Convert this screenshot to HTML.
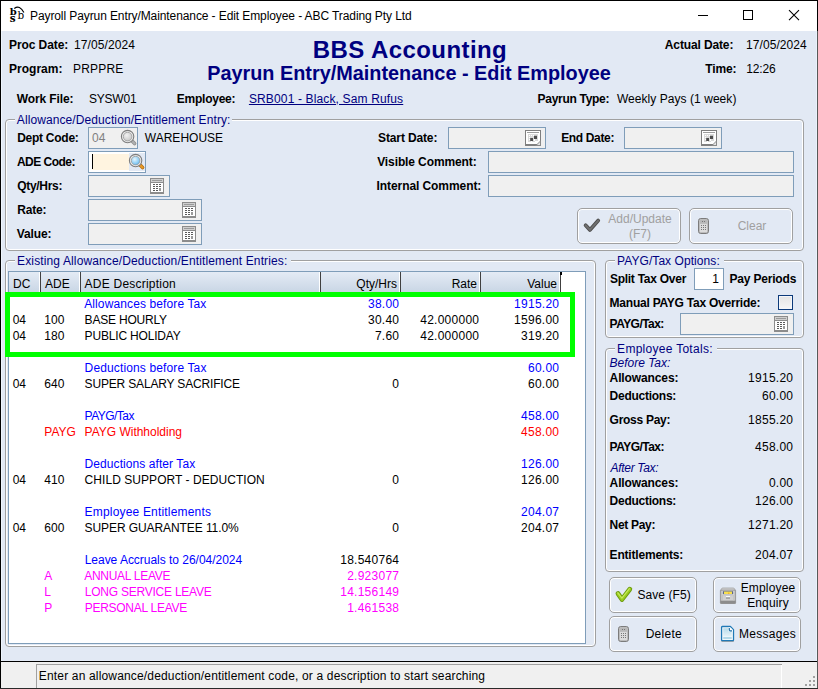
<!DOCTYPE html>
<html>
<head>
<meta charset="utf-8">
<title>Payroll Payrun Entry/Maintenance - Edit Employee - ABC Trading Pty Ltd</title>
<style>
html,body{margin:0;padding:0;}
body{width:818px;height:689px;overflow:hidden;background:#000;font-family:"Liberation Sans",sans-serif;font-size:12px;color:#000;}
#win{position:absolute;left:0;top:0;width:818px;height:689px;overflow:hidden;background:#000;}
#titlebar{position:absolute;left:1px;top:1px;width:816px;height:30px;background:#fff;}
#client{position:absolute;left:1px;top:31px;width:816px;height:630px;background:#e2e9f4;}
#blk{position:absolute;left:1px;top:661px;width:816px;height:1px;background:#000;}
#status{position:absolute;left:1px;top:662px;width:816px;height:26px;background:#f0f0f0;}
.t{position:absolute;white-space:nowrap;line-height:14px;height:14px;font-size:12px;}
.b{font-weight:bold;}
.navy{color:#000080;}
.blue{color:#0000ff;}
.red{color:#ff0000;}
.mag{color:#ff00ff;}
.dis{color:#a0a0a0;}
.num{letter-spacing:0.25px;margin-right:-0.25px;}
.ic{position:absolute;overflow:visible;}
.grp{position:absolute;box-sizing:border-box;border:1px solid #a0a0a0;border-radius:4px;box-shadow:inset 0 0 0 1px #fff;}
.leg{position:absolute;white-space:nowrap;line-height:14px;height:14px;font-size:12px;color:#000080;background:#e2e9f4;padding:0 2px;}
.inp{position:absolute;box-sizing:border-box;border:1px solid #7f9db9;background:#f0f0f0;}
.btn{position:absolute;box-sizing:border-box;border:1px solid #a0a0a0;border-radius:5px;box-shadow:inset 0 0 0 1px #fff;}
#tbl{position:absolute;box-sizing:border-box;left:8px;top:271px;width:578px;height:373px;border:1px solid #7f9db9;background:#fff;}
#thead{position:absolute;left:9px;top:272px;width:552px;height:20px;background:linear-gradient(#e4ebf5,#c9d6e5);}
.dv{position:absolute;top:272px;width:1px;height:20px;background:#fff;border-right:1px solid #404040;}
</style>
</head>
<body>
<div id="win">
<div id="titlebar"></div>
<div id="client"></div>
<div style="position:absolute;left:1px;top:31px;width:1px;height:630px;background:#eef5fd;"></div>
<div style="position:absolute;left:816px;top:31px;width:1px;height:630px;background:#eaf2fc;"></div>
<svg class="ic" style="left:6px;top:3px" width="24" height="24" viewBox="6 3 24 24"><text x="9.7" y="14.8" font-family="DejaVu Serif,serif" font-weight="bold" font-size="10" fill="#000">b</text><text x="9.8" y="22" font-family="DejaVu Serif,serif" font-weight="bold" font-size="10.4" fill="#000">s</text><text x="17.6" y="18.9" font-family="DejaVu Serif,serif" font-size="10.4" fill="#000">b</text><path d="M14.3 8.4 Q19.8 4.4 23.9 12.6" fill="none" stroke="#000" stroke-width="1.2"/></svg>
<div class="t " id="ttl" style="left:30.0px;top:9px;letter-spacing:-0.095px;">Payroll Payrun Entry/Maintenance - Edit Employee - ABC Trading Pty Ltd</div>
<svg class="ic" style="left:690px;top:1px" width="127" height="30" viewBox="0 0 127 30"><g stroke="#000" stroke-width="1" fill="none"><path d="M8 14.5 H18"/><rect x="53.5" y="9.5" width="9" height="9"/><path d="M99 9.2 L109 19.2 M109 9.2 L99 19.2" stroke-width="1.1"/></g></svg>
<div class="t b" style="left:9.1px;top:38px;letter-spacing:-0.102px;">Proc Date:</div>
<div class="t " style="left:74.0px;top:38px;letter-spacing:0.091px;">17/05/2024</div>
<div class="t b" style="left:9.1px;top:62px;letter-spacing:-0.007px;">Program:</div>
<div class="t " style="left:73.1px;top:62px;letter-spacing:0.151px;">PRPPRE</div>
<div class="t b navy" id="h1" style="left:1px;width:818px;text-align:center;top:36px;font-size:24px;letter-spacing:0.42px;line-height:28px;height:28px;">BBS Accounting</div>
<div class="t b navy" id="h2" style="left:0;width:818px;text-align:center;top:61px;font-size:19.85px;line-height:24px;height:24px;">Payrun Entry/Maintenance - Edit Employee</div>
<div class="t b" style="left:664.8px;top:38px;letter-spacing:-0.129px;">Actual Date:</div>
<div class="t " style="left:746.1px;top:38px;letter-spacing:0.068px;">17/05/2024</div>
<div class="t b" style="left:705.3px;top:62px;letter-spacing:-0.173px;">Time:</div>
<div class="t " style="left:746.2px;top:62px;letter-spacing:-0.139px;">12:26</div>
<div class="t b" style="left:16.8px;top:92px;letter-spacing:-0.121px;">Work File:</div>
<div class="t " style="left:88.9px;top:92px;letter-spacing:-0.202px;">SYSW01</div>
<div class="t b" style="left:176.8px;top:92px;letter-spacing:-0.249px;">Employee:</div>
<div class="t navy" style="left:248.9px;top:92px;text-decoration:underline;letter-spacing:0.145px;">SRB001 - Black, Sam Rufus</div>
<div class="t b" style="left:537.6px;top:92px;letter-spacing:-0.294px;">Payrun Type:</div>
<div class="t " style="left:616.9px;top:92px;letter-spacing:0.053px;">Weekly Pays (1 week)</div>
<div class="grp" style="left:5px;top:119px;width:799px;height:132px;"></div>
<div class="leg" style="left:14.80px;top:113px;letter-spacing:0.095px;padding-right:1.3px;">Allowance/Deduction/Entitlement Entry:</div>
<div class="t b" style="left:17.2px;top:131px;letter-spacing:-0.267px;">Dept Code:</div>
<div class="inp" style="left:88px;top:127px;width:50px;height:22px;"></div>
<div class="t " style="left:92px;top:131px;color:#808080;">04</div>
<svg class="ic" style="left:120px;top:129px" width="17" height="17" viewBox="0 0 17 17"><defs><radialGradient id="lg2" cx="0.4" cy="0.35" r="0.8"><stop offset="0" stop-color="#f2f2f2"/><stop offset="0.7" stop-color="#cfcfcf"/><stop offset="1" stop-color="#b4b4b4"/></radialGradient></defs><path d="M11.6 11.6 L14.6 14.6" stroke="#909090" stroke-width="3.6" stroke-linecap="round"/><path d="M12 12 L14.5 14.5" stroke="#b0b0b0" stroke-width="2" stroke-linecap="round"/><circle cx="7.6" cy="7.6" r="6.2" fill="#ededed" stroke="#7e7e7e" stroke-width="1.1"/><circle cx="7.6" cy="7.6" r="4.3" fill="url(#lg2)" stroke="#9a9a9a" stroke-width="0.8"/></svg>
<div class="t " style="left:144.8px;top:131px;letter-spacing:0.009px;">WAREHOUSE</div>
<div class="t b" style="left:16.9px;top:155px;letter-spacing:-0.509px;">ADE Code:</div>
<div class="inp" style="left:88px;top:151px;width:58px;height:22px;background:#fff;"></div>
<div style="position:absolute;left:92px;top:154px;width:37px;height:16px;background:#fff4e0;"></div>
<div style="position:absolute;left:129px;top:153px;width:16px;height:18px;background:#e2e9f4;"></div>
<div style="position:absolute;left:92px;top:154px;width:1px;height:15px;background:#000;"></div>
<svg class="ic" style="left:128.3px;top:152.8px" width="17" height="17" viewBox="0 0 17 17"><defs><radialGradient id="lg" cx="0.4" cy="0.35" r="0.8"><stop offset="0" stop-color="#e6f6ff"/><stop offset="0.6" stop-color="#8ccdf5"/><stop offset="1" stop-color="#4aa3e0"/></radialGradient></defs><path d="M11.6 11.6 L14.6 14.6" stroke="#b87010" stroke-width="3.6" stroke-linecap="round"/><path d="M12 12 L14.5 14.5" stroke="#e89a28" stroke-width="2" stroke-linecap="round"/><circle cx="7.6" cy="7.6" r="6.2" fill="#ededed" stroke="#7e7e7e" stroke-width="1.1"/><circle cx="7.6" cy="7.6" r="4.3" fill="url(#lg)" stroke="#9a9a9a" stroke-width="0.8"/></svg>
<div class="t b" style="left:17.2px;top:179px;letter-spacing:-0.293px;">Qty/Hrs:</div>
<div class="inp" style="left:88px;top:175px;width:82px;height:22px;"></div>
<svg class="ic" style="left:150px;top:178px" width="14" height="16" viewBox="0 0 14 16"><rect x="0.5" y="0.5" width="13" height="15" fill="#fff" stroke="#8c8c8c"/><rect x="1" y="1" width="12" height="3" fill="#cfcfcf"/><rect x="2" y="2" width="10" height="1" fill="#9a9a9a"/><rect x="0" y="4" width="14" height="1" fill="#8c8c8c"/><rect x="0" y="14" width="14" height="2" fill="#8c8c8c"/><g fill="#5a5a5a"><rect x="3" y="6" width="2" height="1"/><rect x="6" y="6" width="2" height="1"/><rect x="9" y="6" width="2" height="1"/><rect x="3" y="8" width="2" height="1"/><rect x="6" y="8" width="2" height="1"/><rect x="9" y="8" width="2" height="1"/><rect x="3" y="10" width="2" height="1"/><rect x="6" y="10" width="2" height="1"/><rect x="3" y="12" width="2" height="1"/><rect x="6" y="12" width="2" height="1"/></g><rect x="9" y="10" width="2" height="3" fill="#9a9a9a"/></svg>
<div class="t b" style="left:17.2px;top:203px;letter-spacing:-0.177px;">Rate:</div>
<div class="inp" style="left:88px;top:199px;width:114px;height:22px;"></div>
<svg class="ic" style="left:182px;top:202px" width="14" height="16" viewBox="0 0 14 16"><rect x="0.5" y="0.5" width="13" height="15" fill="#fff" stroke="#8c8c8c"/><rect x="1" y="1" width="12" height="3" fill="#cfcfcf"/><rect x="2" y="2" width="10" height="1" fill="#9a9a9a"/><rect x="0" y="4" width="14" height="1" fill="#8c8c8c"/><rect x="0" y="14" width="14" height="2" fill="#8c8c8c"/><g fill="#5a5a5a"><rect x="3" y="6" width="2" height="1"/><rect x="6" y="6" width="2" height="1"/><rect x="9" y="6" width="2" height="1"/><rect x="3" y="8" width="2" height="1"/><rect x="6" y="8" width="2" height="1"/><rect x="9" y="8" width="2" height="1"/><rect x="3" y="10" width="2" height="1"/><rect x="6" y="10" width="2" height="1"/><rect x="3" y="12" width="2" height="1"/><rect x="6" y="12" width="2" height="1"/></g><rect x="9" y="10" width="2" height="3" fill="#9a9a9a"/></svg>
<div class="t b" style="left:16.8px;top:227px;letter-spacing:-0.131px;">Value:</div>
<div class="inp" style="left:88px;top:223px;width:114px;height:22px;"></div>
<svg class="ic" style="left:182px;top:226px" width="14" height="16" viewBox="0 0 14 16"><rect x="0.5" y="0.5" width="13" height="15" fill="#fff" stroke="#8c8c8c"/><rect x="1" y="1" width="12" height="3" fill="#cfcfcf"/><rect x="2" y="2" width="10" height="1" fill="#9a9a9a"/><rect x="0" y="4" width="14" height="1" fill="#8c8c8c"/><rect x="0" y="14" width="14" height="2" fill="#8c8c8c"/><g fill="#5a5a5a"><rect x="3" y="6" width="2" height="1"/><rect x="6" y="6" width="2" height="1"/><rect x="9" y="6" width="2" height="1"/><rect x="3" y="8" width="2" height="1"/><rect x="6" y="8" width="2" height="1"/><rect x="9" y="8" width="2" height="1"/><rect x="3" y="10" width="2" height="1"/><rect x="6" y="10" width="2" height="1"/><rect x="3" y="12" width="2" height="1"/><rect x="6" y="12" width="2" height="1"/></g><rect x="9" y="10" width="2" height="3" fill="#9a9a9a"/></svg>
<div class="t b" style="left:378.1px;top:131px;letter-spacing:-0.138px;">Start Date:</div>
<div class="inp" style="left:448px;top:127px;width:98px;height:22px;"></div>
<svg class="ic" style="left:525px;top:130px" width="16" height="16" viewBox="0 0 16 16"><rect x="0.5" y="0.5" width="15" height="15" fill="#fff" stroke="#7e7e7e"/><rect x="0" y="14" width="16" height="2" fill="#808080"/><rect x="2" y="2" width="12" height="1" fill="#9c9c9c"/><rect x="3" y="4" width="10" height="8" fill="#dadada"/><g fill="#fff"><rect x="4" y="5" width="1" height="1"/><rect x="6" y="5" width="1" height="1"/><rect x="8" y="5" width="1" height="1"/><rect x="4" y="7" width="1" height="1"/><rect x="4" y="9" width="1" height="1"/><rect x="9" y="9" width="1" height="2"/><rect x="6" y="11" width="1" height="1"/><rect x="10" y="11" width="3" height="1"/></g><rect x="5.2" y="8" width="2.8" height="3" fill="#4e4e4e"/><rect x="9" y="5.8" width="3" height="3.2" fill="#4e4e4e"/><path d="M10 16 L16 10 L16 16 Z" fill="#8a8a8a"/><path d="M12 15 L15 12 L15 15 Z" fill="#e4e4e4"/></svg>
<div class="t b" style="left:561.2px;top:131px;letter-spacing:-0.351px;">End Date:</div>
<div class="inp" style="left:624px;top:127px;width:98px;height:22px;"></div>
<svg class="ic" style="left:701px;top:130px" width="16" height="16" viewBox="0 0 16 16"><rect x="0.5" y="0.5" width="15" height="15" fill="#fff" stroke="#7e7e7e"/><rect x="0" y="14" width="16" height="2" fill="#808080"/><rect x="2" y="2" width="12" height="1" fill="#9c9c9c"/><rect x="3" y="4" width="10" height="8" fill="#dadada"/><g fill="#fff"><rect x="4" y="5" width="1" height="1"/><rect x="6" y="5" width="1" height="1"/><rect x="8" y="5" width="1" height="1"/><rect x="4" y="7" width="1" height="1"/><rect x="4" y="9" width="1" height="1"/><rect x="9" y="9" width="1" height="2"/><rect x="6" y="11" width="1" height="1"/><rect x="10" y="11" width="3" height="1"/></g><rect x="5.2" y="8" width="2.8" height="3" fill="#4e4e4e"/><rect x="9" y="5.8" width="3" height="3.2" fill="#4e4e4e"/><path d="M10 16 L16 10 L16 16 Z" fill="#8a8a8a"/><path d="M12 15 L15 12 L15 15 Z" fill="#e4e4e4"/></svg>
<div class="t b" style="left:377.2px;top:155px;letter-spacing:-0.109px;">Visible Comment:</div>
<div class="inp" style="left:488px;top:151px;width:306px;height:22px;"></div>
<div class="t b" style="left:376.6px;top:179px;letter-spacing:-0.082px;">Internal Comment:</div>
<div class="inp" style="left:488px;top:175px;width:306px;height:22px;"></div>
<div class="btn" style="left:577px;top:208px;width:104px;height:36px;"></div>
<svg class="ic" style="left:583px;top:217px" width="18" height="17" viewBox="0 0 18 17"><path d="M2.6 8.3 L6.9 12.9 L15.2 3.6" fill="none" stroke="#4e4e4e" stroke-width="3.8" stroke-linecap="round" stroke-linejoin="round"/><path d="M2.6 8.3 L6.9 12.9 L15.2 3.6" fill="none" stroke="#707070" stroke-width="2" stroke-linecap="round" stroke-linejoin="round"/></svg>
<div class="t dis" style="left:600px;top:212px;width:80px;text-align:center;">Add/Update</div>
<div class="t dis" style="left:600px;top:227px;width:80px;text-align:center;">(F7)</div>
<div class="btn" style="left:689px;top:208px;width:104px;height:36px;"></div>
<svg class="ic" style="left:698px;top:218px" width="11" height="16" viewBox="0 0 11 16"><rect x="0.5" y="0.5" width="10" height="15" rx="2.2" fill="#bdbdbd" stroke="#7c7c7c"/><rect x="2" y="2" width="7" height="3" rx="1" fill="#b8b8b8"/><rect x="2" y="6" width="7" height="8" fill="#dcdcdc"/><g fill="#777"><rect x="3" y="7" width="1" height="1"/><rect x="5" y="7" width="1" height="1"/><rect x="7" y="7" width="1" height="1"/><rect x="3" y="9" width="1" height="1"/><rect x="5" y="9" width="1" height="1"/><rect x="7" y="9" width="1" height="1"/><rect x="3" y="11" width="1" height="1"/><rect x="5" y="11" width="1" height="1"/><rect x="7" y="11" width="1" height="1"/><rect x="4" y="3" width="1" height="1"/><rect x="6" y="3" width="1" height="1"/></g></svg>
<div class="t dis" style="left:737px;top:219px;width:30px;text-align:center;">Clear</div>
<div class="grp" style="left:5px;top:260px;width:591px;height:387px;"></div>
<div class="leg" style="left:15.10px;top:254px;letter-spacing:0.126px;padding-right:3.2px;">Existing Allowance/Deduction/Entitlement Entries:</div>
<div id="tbl"></div>
<div id="thead"></div>
<div class="dv" style="left:39px;"></div>
<div class="dv" style="left:79px;"></div>
<div class="dv" style="left:319px;"></div>
<div class="dv" style="left:399px;"></div>
<div class="dv" style="left:479px;"></div>
<div class="dv" style="left:559px;"></div>
<div style="position:absolute;left:560px;top:272px;width:2px;height:3px;background:#000;"></div>
<div class="t " style="left:13px;top:277px;">DC</div>
<div class="t " style="left:45px;top:277px;">ADE</div>
<div class="t " style="left:84.6px;top:277px;letter-spacing:0.224px;">ADE Description</div>
<div class="t " style="right:421px;top:277px;">Qty/Hrs</div>
<div class="t " style="right:341px;top:277px;">Rate</div>
<div class="t " style="right:261px;top:277px;">Value</div>
<div class="t blue" style="left:84.2px;top:297px;letter-spacing:0.117px;">Allowances before Tax</div>
<div class="t blue num" style="right:419px;top:297px;">38.00</div>
<div class="t blue num" style="right:259px;top:297px;">1915.20</div>
<div class="t " style="left:12.7px;top:313px;">04</div>
<div class="t " style="left:44.3px;top:313px;">100</div>
<div class="t " style="left:84.6px;top:313px;letter-spacing:-0.196px;">BASE HOURLY</div>
<div class="t  num" style="right:419px;top:313px;">30.40</div>
<div class="t  num" style="right:339px;top:313px;">42.000000</div>
<div class="t  num" style="right:259px;top:313px;">1596.00</div>
<div class="t " style="left:12.7px;top:329px;">04</div>
<div class="t " style="left:44.3px;top:329px;">180</div>
<div class="t " style="left:84.6px;top:329px;letter-spacing:-0.175px;">PUBLIC HOLIDAY</div>
<div class="t  num" style="right:419px;top:329px;">7.60</div>
<div class="t  num" style="right:339px;top:329px;">42.000000</div>
<div class="t  num" style="right:259px;top:329px;">319.20</div>
<div class="t blue" style="left:84.6px;top:361px;letter-spacing:0.130px;">Deductions before Tax</div>
<div class="t blue num" style="right:259px;top:361px;">60.00</div>
<div class="t " style="left:12.7px;top:377px;">04</div>
<div class="t " style="left:44.3px;top:377px;">640</div>
<div class="t " style="left:84.6px;top:377px;letter-spacing:-0.169px;">SUPER SALARY SACRIFICE</div>
<div class="t " style="right:419px;top:377px;">0</div>
<div class="t  num" style="right:259px;top:377px;">60.00</div>
<div class="t blue" style="left:84.6px;top:409px;letter-spacing:-0.525px;">PAYG/Tax</div>
<div class="t blue num" style="right:259px;top:409px;">458.00</div>
<div class="t red" style="left:44.3px;top:425px;">PAYG</div>
<div class="t red" style="left:84.6px;top:425px;letter-spacing:-0.015px;">PAYG Withholding</div>
<div class="t red num" style="right:259px;top:425px;">458.00</div>
<div class="t blue" style="left:84.6px;top:457px;letter-spacing:0.074px;">Deductions after Tax</div>
<div class="t blue num" style="right:259px;top:457px;">126.00</div>
<div class="t " style="left:12.7px;top:473px;">04</div>
<div class="t " style="left:44.3px;top:473px;">410</div>
<div class="t " style="left:84.6px;top:473px;letter-spacing:0.052px;">CHILD SUPPORT - DEDUCTION</div>
<div class="t " style="right:419px;top:473px;">0</div>
<div class="t  num" style="right:259px;top:473px;">126.00</div>
<div class="t blue" style="left:84.6px;top:505px;letter-spacing:0.179px;">Employee Entitlements</div>
<div class="t blue num" style="right:259px;top:505px;">204.07</div>
<div class="t " style="left:12.7px;top:521px;">04</div>
<div class="t " style="left:44.3px;top:521px;">600</div>
<div class="t " style="left:84.6px;top:521px;letter-spacing:-0.088px;">SUPER GUARANTEE 11.0%</div>
<div class="t " style="right:419px;top:521px;">0</div>
<div class="t  num" style="right:259px;top:521px;">204.07</div>
<div class="t blue" style="left:84.7px;top:553px;letter-spacing:-0.026px;">Leave Accruals to 26/04/2024</div>
<div class="t  num" style="right:419px;top:553px;">18.540764</div>
<div class="t mag" style="left:44.3px;top:569px;">A</div>
<div class="t mag" style="left:84.2px;top:569px;letter-spacing:-0.283px;">ANNUAL LEAVE</div>
<div class="t mag num" style="right:419px;top:569px;">2.923077</div>
<div class="t mag" style="left:44.3px;top:585px;">L</div>
<div class="t mag" style="left:84.7px;top:585px;letter-spacing:-0.226px;">LONG SERVICE LEAVE</div>
<div class="t mag num" style="right:419px;top:585px;">14.156149</div>
<div class="t mag" style="left:44.3px;top:601px;">P</div>
<div class="t mag" style="left:84.7px;top:601px;letter-spacing:-0.268px;">PERSONAL LEAVE</div>
<div class="t mag num" style="right:419px;top:601px;">1.461538</div>
<div style="position:absolute;left:5px;top:292px;width:560px;height:55px;border:5px solid #00ff00;"></div>
<div class="grp" style="left:605px;top:260px;width:199px;height:78px;"></div>
<div class="leg" style="left:615.10px;top:254px;letter-spacing:0.065px;padding-right:4px;">PAYG/Tax Options:</div>
<div class="t b" style="left:609.9px;top:272px;letter-spacing:-0.257px;">Split Tax Over</div>
<div class="inp" style="left:694px;top:268px;width:30px;height:22px;background:#fff;"></div>
<div class="t " style="right:99px;top:272px;">1</div>
<div class="t b" style="left:729.4px;top:272px;letter-spacing:-0.173px;">Pay Periods</div>
<div class="t b" style="left:609.6px;top:296px;letter-spacing:-0.233px;">Manual PAYG Tax Override:</div>
<div style="position:absolute;box-sizing:border-box;left:778px;top:295px;width:15px;height:15px;border:1px solid #0c3a7a;background:linear-gradient(#e4e4e4,#f6f6f6);box-shadow:inset 0 0 0 1px #f4f6fa;"></div>
<div class="t b" style="left:609.6px;top:317px;letter-spacing:-0.555px;">PAYG/Tax:</div>
<div class="inp" style="left:680px;top:313px;width:114px;height:22px;"></div>
<svg class="ic" style="left:774px;top:316px" width="14" height="16" viewBox="0 0 14 16"><rect x="0.5" y="0.5" width="13" height="15" fill="#fff" stroke="#8c8c8c"/><rect x="1" y="1" width="12" height="3" fill="#cfcfcf"/><rect x="2" y="2" width="10" height="1" fill="#9a9a9a"/><rect x="0" y="4" width="14" height="1" fill="#8c8c8c"/><rect x="0" y="14" width="14" height="2" fill="#8c8c8c"/><g fill="#5a5a5a"><rect x="3" y="6" width="2" height="1"/><rect x="6" y="6" width="2" height="1"/><rect x="9" y="6" width="2" height="1"/><rect x="3" y="8" width="2" height="1"/><rect x="6" y="8" width="2" height="1"/><rect x="9" y="8" width="2" height="1"/><rect x="3" y="10" width="2" height="1"/><rect x="6" y="10" width="2" height="1"/><rect x="3" y="12" width="2" height="1"/><rect x="6" y="12" width="2" height="1"/></g><rect x="9" y="10" width="2" height="3" fill="#9a9a9a"/></svg>
<div class="grp" style="left:605px;top:348px;width:199px;height:224px;"></div>
<div class="leg" style="left:615.10px;top:342px;letter-spacing:0.284px;padding-right:4px;">Employee Totals:</div>
<div class="t navy" style="left:609.6px;top:356px;font-style:italic;letter-spacing:-0.019px;">Before Tax:</div>
<div class="t b" style="left:609.6px;top:371px;letter-spacing:-0.112px;">Allowances:</div>
<div class="t  num" style="right:25px;top:371px;">1915.20</div>
<div class="t b" style="left:609.6px;top:389px;letter-spacing:-0.264px;">Deductions:</div>
<div class="t  num" style="right:25px;top:389px;">60.00</div>
<div class="t b" style="left:609.6px;top:413px;letter-spacing:-0.274px;">Gross Pay:</div>
<div class="t  num" style="right:25px;top:413px;">1855.20</div>
<div class="t b" style="left:609.6px;top:440px;letter-spacing:-0.530px;">PAYG/Tax:</div>
<div class="t  num" style="right:25px;top:440px;">458.00</div>
<div class="t navy" style="left:610.6px;top:461px;font-style:italic;letter-spacing:-0.320px;">After Tax:</div>
<div class="t b" style="left:609.6px;top:476px;letter-spacing:-0.112px;">Allowances:</div>
<div class="t  num" style="right:25px;top:476px;">0.00</div>
<div class="t b" style="left:609.6px;top:494px;letter-spacing:-0.264px;">Deductions:</div>
<div class="t  num" style="right:25px;top:494px;">126.00</div>
<div class="t b" style="left:609.6px;top:518px;letter-spacing:-0.303px;">Net Pay:</div>
<div class="t  num" style="right:25px;top:518px;">1271.20</div>
<div class="t b" style="left:609.6px;top:548px;letter-spacing:-0.193px;">Entitlements:</div>
<div class="t  num" style="right:25px;top:548px;">204.07</div>
<div class="btn" style="left:609px;top:577px;width:88px;height:36px;"></div>
<svg class="ic" style="left:615px;top:586px" width="18" height="18" viewBox="0 0 18 18"><path d="M3 7.6 L7 13.4 L14.8 3.2" fill="none" stroke="#6b9a10" stroke-width="4.8" stroke-linecap="round" stroke-linejoin="round"/><path d="M3 7.6 L7 13.4 L14.8 3.2" fill="none" stroke="#9acb1e" stroke-width="3" stroke-linecap="round" stroke-linejoin="round"/><path d="M2.8 6.8 L6.9 12.2 L14.4 2.6" fill="none" stroke="#c6ec5e" stroke-width="1.1" stroke-linecap="round" stroke-linejoin="round"/></svg>
<div class="t " style="left:637.4px;top:588px;letter-spacing:0.089px;">Save (F5)</div>
<div class="btn" style="left:713px;top:577px;width:88px;height:36px;"></div>
<svg class="ic" style="left:720px;top:586.5px" width="16" height="17" viewBox="0 0 16 17"><path d="M2.2 1 H13.8 L15.6 3.4 H0.4 Z" fill="#d2d2d2" stroke="#a2a2a2" stroke-width="0.8"/><rect x="0.4" y="3.2" width="15.2" height="13.3" rx="0.8" fill="#b4b4b4" stroke="#8e8e8e" stroke-width="0.8"/><rect x="1.6" y="3.8" width="12.8" height="9.8" fill="#dedede"/><rect x="2.8" y="4.2" width="10.4" height="3" fill="#5c6684"/><rect x="4" y="4.6" width="8" height="2.4" fill="#f8e04e"/><rect x="8" y="5.6" width="1.4" height="1.2" fill="#f0a830"/><rect x="2.4" y="8" width="11.2" height="5.6" fill="#d0d0d0" stroke="#bcbcbc" stroke-width="0.6"/><rect x="6" y="9" width="4" height="1.2" fill="#fafafa"/><rect x="6" y="10.2" width="4" height="1.8" fill="#a6a6a6"/><rect x="0.4" y="13.8" width="15.2" height="2.8" fill="#8c8c8c"/></svg>
<div class="t " style="left:737px;top:581px;width:62px;text-align:center;letter-spacing:0.15px;">Employee</div>
<div class="t " style="left:737px;top:596px;width:62px;text-align:center;letter-spacing:0.15px;">Enquiry</div>
<div class="btn" style="left:609px;top:616px;width:88px;height:36px;"></div>
<svg class="ic" style="left:618px;top:626px" width="11" height="16" viewBox="0 0 11 16"><rect x="0.5" y="0.5" width="10" height="15" rx="2.2" fill="#bdbdbd" stroke="#7c7c7c"/><rect x="2" y="2" width="7" height="3" rx="1" fill="#b8b8b8"/><rect x="2" y="6" width="7" height="8" fill="#dcdcdc"/><g fill="#777"><rect x="3" y="7" width="1" height="1"/><rect x="5" y="7" width="1" height="1"/><rect x="7" y="7" width="1" height="1"/><rect x="3" y="9" width="1" height="1"/><rect x="5" y="9" width="1" height="1"/><rect x="7" y="9" width="1" height="1"/><rect x="3" y="11" width="1" height="1"/><rect x="5" y="11" width="1" height="1"/><rect x="7" y="11" width="1" height="1"/><rect x="4" y="3" width="1" height="1"/><rect x="6" y="3" width="1" height="1"/></g></svg>
<div class="t " style="left:645.7px;top:627px;letter-spacing:0.257px;">Delete</div>
<div class="btn" style="left:713px;top:616px;width:88px;height:36px;"></div>
<svg class="ic" style="left:720.4px;top:625px" width="15" height="18" viewBox="0 0 15 18"><defs><linearGradient id="pg" x1="0" y1="0" x2="0" y2="1"><stop offset="0" stop-color="#b6dbea"/><stop offset="1" stop-color="#e4f2f8"/></linearGradient></defs><rect x="1.4" y="15.6" width="12.4" height="1.4" fill="#9a9088" opacity="0.7"/><path d="M1.6 2.2 Q1.6 1.5 2.3 1.5 H10.4 L13.5 4.6 V15 Q13.5 15.7 12.8 15.7 H2.3 Q1.6 15.7 1.6 15 Z" fill="#fff" stroke="#2079b6" stroke-width="1.3" stroke-linejoin="round"/><rect x="3.2" y="3.2" width="8.6" height="8" fill="url(#pg)"/><rect x="3.2" y="11.8" width="8.6" height="2.4" fill="#b2d9e9"/><path d="M8.6 2.6 H10.2 L12.6 5 V6.6 H8.6 Z" fill="#fff"/><path d="M9.3 3 V4.4 Q9.3 5.9 10.8 5.9 H12" fill="none" stroke="#1f6fa8" stroke-width="1.1"/></svg>
<div class="t " style="left:739px;top:627px;letter-spacing:0.3px;">Messages</div>
<div id="blk"></div>
<div id="status"></div>
<div style="position:absolute;left:36px;top:664px;width:746px;height:24px;border-left:1px solid #a0a0a0;border-top:1px solid #a0a0a0;box-sizing:border-box;"></div>
<div style="position:absolute;left:781px;top:665px;width:1px;height:23px;background:#fff;"></div>
<div class="t " style="left:38.8px;top:669px;letter-spacing:0.164px;">Enter an allowance/deduction/entitlement code, or a description to start searching</div>
<svg class="ic" style="left:803px;top:674px" width="14" height="14" viewBox="0 0 14 14"><g fill="#a0a0a0"><rect x="10" y="2" width="2" height="2"/><rect x="6" y="6" width="2" height="2"/><rect x="10" y="6" width="2" height="2"/><rect x="2" y="10" width="2" height="2"/><rect x="6" y="10" width="2" height="2"/><rect x="10" y="10" width="2" height="2"/></g></svg>
<div style="position:absolute;left:817px;top:31px;width:1px;height:658px;background:#585858;"></div>
<div style="position:absolute;left:0;top:688px;width:818px;height:1px;background:#2a2a2a;"></div>
</div>
</body>
</html>
